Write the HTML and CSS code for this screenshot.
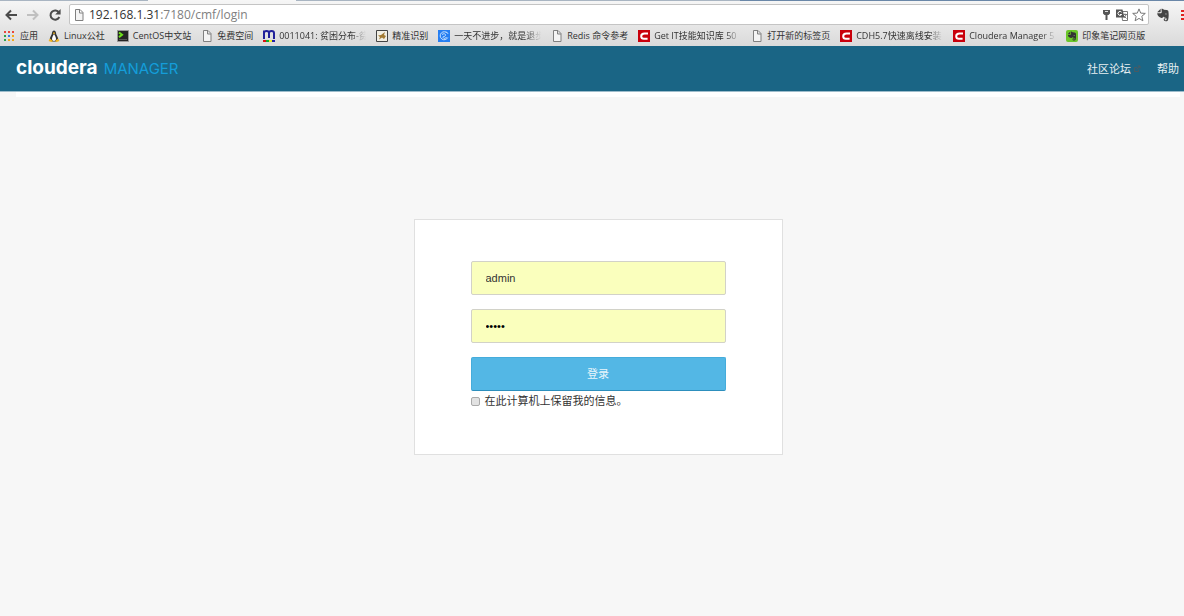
FILE: index.html
```html
<!DOCTYPE html>
<html lang="zh-CN">
<head>
<meta charset="utf-8">
<title>Cloudera Manager</title>
<meta name="viewport" content="width=device-width, initial-scale=1">
<link rel="stylesheet" href="styles.css">
</head>
<body>
<svg class="defs" aria-hidden="true">
  <symbol id="page" viewBox="0 0 12 12"><path d="M2.500 .5h4.500l3 3v8H2.500zM6.500 .5v3.500h3.500" fill="#f4f4f4" stroke="#808080"/></symbol>
  <symbol id="csdn" viewBox="0 0 12 12"><path d="M0 0h12v12H0z" fill="#c9000b"/><path d="M10 3.500H6.600C4.400 3.500 3.200 4.600 3.200 6.200S4.300 8.700 6 8.700h3.600" fill="none" stroke="#fff" stroke-width="2"/></symbol>
  <symbol id="elephant" viewBox="0 0 12 12"><path d="M4 .6 1 3.700h2.400c.5 0 .6-.2.6-.6zM4.700.7c1 0 1.700.2 2 .8l2.500.3c1 .1 1.400.6 1.500 1.600.3 2.300.2 4.800-.3 6.700-.3 1-1 1.300-2 1.300-1.200 0-1.800-.6-1.800-1.500 0-.8.6-1.300 1.600-1.200v.8c-.5 0-.7.2-.7.5s.3.500.8.500c.6 0 .8-.3.8-.9 0-.9-.6-1.300-1.600-1.400-.7-.1-1-.4-1.200-.9-.2.800-.6 1.300-1.600 1.200C2.500 7.800 1.200 7 1 4.600h2.700c.800 0 1.200-.4 1.200-1.200z"/><path d="M7.800 5.300c.2-.8 1.200-.8 1.500 0z" fill="#fff"/></symbol>
  <symbol id="external" viewBox="0 0 8 8"><path d="M4 2.500H1.500v4h4V4.500M3.500 4.500 7 1M4.500 1H7v2.500" fill="none" stroke="#4a5a62"/></symbol>
</svg>

<div class="browser">
  <div class="tabs"><span class="tab"></span><span class="tab active"></span><span class="tab wide"></span><span class="glass"></span></div>
  <div class="toolbar">
    <div class="nav">
      <button type="button" aria-label="后退"><svg class="nav-icon" viewBox="0 0 14 14"><path d="M13 7H3M7 2.500 2.500 7 7 11.500" fill="none" stroke="#4b4b4b" stroke-width="2"/></svg></button>
      <button type="button" aria-label="前进"><svg class="nav-icon" viewBox="0 0 14 14"><path d="M1 7h10M7 2.500 11.500 7 7 11.500" fill="none" stroke="#c0c0c0" stroke-width="2"/></svg></button>
      <button type="button" aria-label="重新加载"><svg class="nav-icon" viewBox="0 0 14 14"><path d="M11 4.500A4.600 4.600 0 1 0 11.300 9" fill="none" stroke="#4b4b4b" stroke-width="2"/><path d="M12.600 1v5.500H7.200z" fill="#4b4b4b"/></svg></button>
    </div>
    <div class="address">
      <svg class="icon" aria-hidden="true"><use href="#page"/></svg>
      <p class="url">192.168.1.31<span>:7180/cmf/login</span></p>
      <svg class="icon" viewBox="0 0 12 12" aria-hidden="true"><path d="M3 1h7v3.500L8.500 6H7.500v5h-2V6h-1L3 4.500z" fill="#555"/><path d="M5 2.500h3" stroke="#ddd"/></svg>
      <svg class="icon" viewBox="0 0 12 12" aria-hidden="true"><path d="M5.500 2.500h6v9h-5z" fill="#fff" stroke="#777"/><path d="M0 .5h6.500l2 8H0z" fill="#555"/><path d="M5.600 3.200A2 2 0 1 0 5.700 5.500H4" fill="none" stroke="#fff"/><path d="M7 5.500h4M9 4.500v1M10.300 5.500 8 9M8 7l2.500 2.500" fill="none" stroke="#777"/></svg>
      <svg class="star" viewBox="0 0 14 14" aria-hidden="true"><path d="m7 .9 1.700 4.200 4.600.3-3.500 2.900 1.100 4.500L7 10.400l-3.900 2.400 1.100-4.500L.7 5.400l4.600-.3z" fill="#fff" stroke="#777"/></svg>
    </div>
    <svg class="evernote" viewBox="0 0 12 12" aria-hidden="true"><use href="#elephant"/></svg>
    <svg class="menu" viewBox="0 0 4 12" aria-hidden="true"><path d="M1 2h3M1 6h3M1 10h3" stroke="#e02020" stroke-width="2"/></svg>
  </div>
  <nav class="bookmarks">
    <a href="#"><svg class="icon" viewBox="0 0 12 12"><path d="M0 1h2v2H0zM4 1h2v2H4zM8 1h2v2H8z" fill="#e8453c"/><path d="M0 5h2v2H0zM0 9h2v2H0z" fill="#2ba24c"/><path d="M4 5h2v2H4z" fill="#3a7be0"/><path d="M8 5h2v2H8zM4 9h2v2H4zM8 9h2v2H8z" fill="#f5a816"/></svg><span>应用</span></a>
    <a href="#" class="spaced"><svg class="icon" viewBox="0 0 12 12"><path d="M4 3c0-3.500 4-3.500 4 0 0 2 2.300 3.800 2.300 6.500L8 11.500H4L1.700 9.500C1.700 6.800 4 5 4 3z" fill="#333"/><path d="M6 4c-1 2-2 3-2 5 0 2.500 4 2.500 4 0 0-2-1-3-2-5z" fill="#fff"/><path d="m4.700 3 1.300-.7 1.300.7L6 4.300zM2 8.500 5 11l-1.500 1L.5 11zM10 8.500 7 11l1.500 1 3-1z" fill="#f2b51d"/></svg><span>Linux公社</span></a>
    <a href="#"><svg class="icon" viewBox="0 0 12 12"><path d="M.5.5h11v11H.5z" fill="#252525" stroke="#999"/><path d="m2 2.500 3 2.300-3 2.300" fill="none" stroke="#6ee01b" stroke-width="2"/><path d="M2 9.500h8" stroke="#555"/></svg><span>CentOS中文站</span></a>
    <a href="#"><svg class="icon"><use href="#page"/></svg><span>免费空间</span></a>
    <a href="#"><svg class="icon" viewBox="0 0 12 12"><path d="M1 9V.5M1 3q0-2 2.500-2T6 3v5V3q0-2 2.500-2T11 3v6" fill="none" stroke="#20209a" stroke-width="2"/><path d="M0 10h3v2H0z" fill="#d11"/><path d="M3 10h3v2H3z" fill="#1a3"/><path d="M6 10h3v2H6z" fill="#ee2"/><path d="M9 10h3v2H9z" fill="#22a"/></svg><span class="faded">0011041: 贫困分布-贫</span></a>
    <a href="#"><svg class="icon" viewBox="0 0 12 12"><path d="M.5.5h11v11H.5z" fill="#f1eee3" stroke="#444"/><path d="M2 5.500 5 5l4-3-1 3 2 1-2 3-2-1.500-3 2 1-2.500z" fill="#a27a33"/></svg><span>精准识别</span></a>
    <a href="#"><svg class="icon" viewBox="0 0 12 12"><path d="M0 0h12v12H0z" fill="#267ff2"/><path d="M9.500 3.500a4 4 0 1 0 .3 4M4 4.500c2-1.500 4-.5 3.500 1S4.500 6 5 7.500s3 1 3.500-.5M8 1.500l2 2" fill="none" stroke="#c7e2ff"/></svg><span class="faded">一天不进步，就是退步</span></a>
    <a href="#"><svg class="icon"><use href="#page"/></svg><span>Redis 命令参考</span></a>
    <a href="#"><svg class="icon"><use href="#csdn"/></svg><span class="faded">Get IT技能知识库 50</span></a>
    <a href="#"><svg class="icon"><use href="#page"/></svg><span>打开新的标签页</span></a>
    <a href="#"><svg class="icon"><use href="#csdn"/></svg><span class="faded">CDH5.7快速离线安装</span></a>
    <a href="#"><svg class="icon"><use href="#csdn"/></svg><span class="faded">Cloudera Manager 5</span></a>
    <a href="#"><svg class="icon note"><use href="#elephant"/></svg><span>印象笔记网页版</span></a>
  </nav>
</div>

<header class="header">
  <a class="logo" href="#"><strong>cloudera</strong><span>MANAGER</span></a>
  <nav class="links">
    <a href="#">社区论坛<svg class="ext" aria-hidden="true"><use href="#external"/></svg></a>
    <a href="#">帮助</a>
  </nav>
</header>

<main class="main">
  <form class="login">
    <input class="field" type="text" aria-label="用户名" value="admin">
    <input class="field" type="password" aria-label="密码" value="admin">
    <button class="submit" type="button">登录</button>
    <label class="remember"><input type="checkbox">在此计算机上保留我的信息。</label>
  </form>
</main>
</body>
</html>
```
FILE: styles.css
```css
* { box-sizing: border-box; }

body {
  margin: 0;
  min-height: 100vh;
  background: #f7f7f7;
  color: #333;
  font: 11px/16px "Liberation Sans", "Noto Sans CJK SC", sans-serif;
  overflow-x: hidden;
}

a { color: inherit; text-decoration: none; }
button { border: 0; padding: 0; background: none; font: inherit; }
svg { display: block; flex: none; }
.defs { position: absolute; width: 0; height: 0; }
.icon { width: 12px; height: 12px; }

/* Browser frame */
.browser {
  background: linear-gradient(#f6f6f6, #dadada);
  font-family: "Open Sans", "Noto Sans CJK SC", sans-serif;
}
.tabs { display: flex; height: 1px; background: #a9b5c2; }
.tab { flex: 1; }
.tab.active { background: #f6f6f6; }
.tab.wide { flex: 3; }
.glass { flex: 3; background: #6a87a8; }

.toolbar {
  display: flex;
  align-items: center;
  height: 25px;
  padding: 3px 0 1px 4px;
}
.nav { display: flex; gap: 8px; width: 65px; }
.nav-icon { width: 14px; height: 14px; }
.address {
  display: flex;
  flex: 1;
  align-items: center;
  gap: 4px;
  height: 21px;
  padding: 0 2px 0 3px;
  background: #fff;
  border: 1px solid #c4c4c4;
  border-radius: 2px;
}
.url { flex: 1; margin: 0; color: #333; font-size: 12px; }
.url span { color: #808080; }
.star { width: 14px; height: 14px; }
.evernote { width: 14px; height: 14px; margin: 0 10px 0 7px; fill: #444; }
.menu { width: 4px; height: 12px; }

.bookmarks {
  display: flex;
  gap: 10px;
  height: 20px;
  padding: 0 4px 1px;
  color: #333;
  font-size: 9px;
  white-space: nowrap;
}
.bookmarks a { display: flex; flex: none; align-items: center; gap: 4px; }
.bookmarks .spaced { padding-right: 2px; }
.faded {
  width: 87px;
  overflow: hidden;
  -webkit-mask-image: linear-gradient(to right, #000 72px, transparent);
  mask-image: linear-gradient(to right, #000 72px, transparent);
}
.note { padding: 1px; border-radius: 2px; background: #6cc72b; fill: #333; }

/* Application header */
.header {
  display: flex;
  align-items: center;
  justify-content: space-between;
  height: 46px;
  padding: 0 5px 0 16px;
  background: #1a6585;
  border-bottom: 1px solid #9dbccb;
  color: #fff;
}
.logo { display: flex; align-items: baseline; gap: 6px; font-family: Inter, sans-serif; }
.logo strong { font-size: 19px; }
.logo span { color: #149dd9; font-size: 15px; }
.links { display: flex; gap: 16px; color: #e8f0f3; }
.links a { display: flex; align-items: center; gap: 2px; }
.ext { width: 8px; height: 8px; }

/* Login form */
.main {
  margin: 0 4px 0 16px;
  border-top: 5px solid #fff;
  padding-top: 122px;
}
.login {
  display: flex;
  flex-direction: column;
  width: 369px;
  margin: 0 auto;
  padding: 41px 56px 45px;
  background: #fff;
  border: 1px solid #e0e0e0;
}
.field {
  height: 34px;
  margin: 0 0 14px;
  padding: 0 14px;
  background: #faffbd;
  border: 1px solid #d2d2c8;
  border-radius: 2px;
  color: #333;
  font: inherit;
}
.field[type="password"] { color: #000; }
.submit {
  height: 34px;
  background: #53b7e5;
  border: 1px solid #45acdb;
  border-bottom-color: #2d8fbd;
  border-radius: 2px;
  color: #e8f5fb;
}
.remember { display: flex; align-items: center; gap: 5px; margin-top: 2px; }
.remember input {
  appearance: none;
  width: 9px;
  height: 9px;
  margin: 0;
  background: #e2e2e2;
  border: 1px solid #aaa;
  border-radius: 2px;
}
```
